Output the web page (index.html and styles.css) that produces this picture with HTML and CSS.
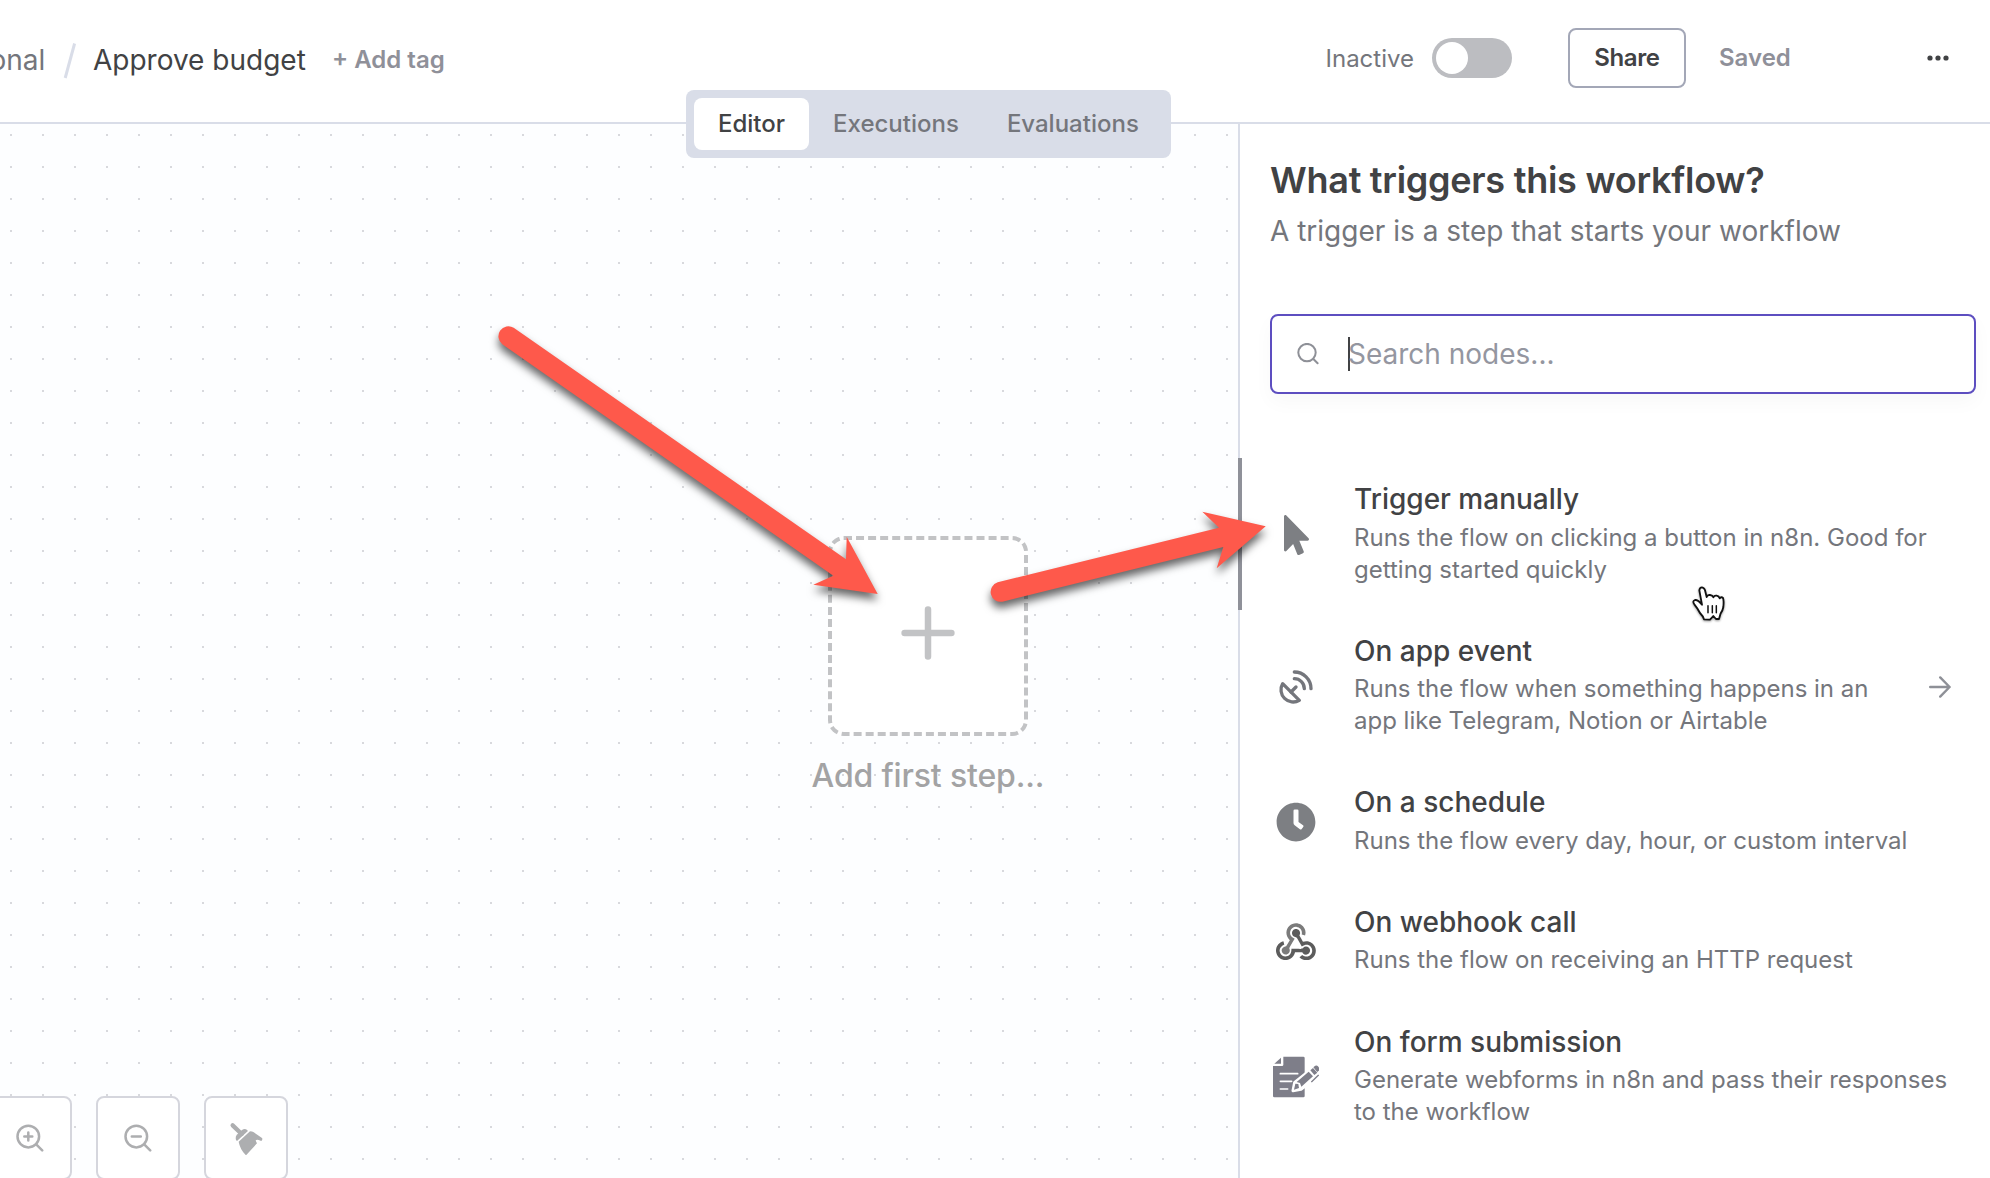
FILE: index.html
```html
<!DOCTYPE html>
<html lang="en">
<head>
<meta charset="utf-8">
<title>Approve budget</title>
<link rel="stylesheet" href="styles.css">
</head>
<body>
<div class="app">
  <header class="topbar">
    <div class="crumbs">
      <span class="crumb-project">Personal</span>
      <svg class="crumb-slash" width="14" height="38" viewBox="0 0 14 38"><path d="M11.6 1.5 2.2 36" stroke="#d9dde8" stroke-width="3"/></svg>
      <span class="crumb-name">Approve budget</span>
      <span class="add-tag">+ Add tag</span>
    </div>
    <div class="actions">
      <span class="status">Inactive</span>
      <span class="switch"><span class="knob"></span></span>
      <button class="share">Share</button>
      <span class="saved">Saved</span>
      <svg class="more" width="24" height="8" viewBox="0 0 24 8" fill="#414244"><circle cx="4" cy="4" r="2.6"/><circle cx="12" cy="4" r="2.6"/><circle cx="20" cy="4" r="2.6"/></svg>
    </div>
    <nav class="tabs">
      <span class="tab active">Editor</span>
      <span class="tab">Executions</span>
      <span class="tab">Evaluations</span>
    </nav>
  </header>

  <main class="main">
    <section class="canvas">
      <div class="first-step">
        <div class="first-step-box">
          <svg width="54" height="54" viewBox="0 0 54 54" stroke="#c2c3c5" stroke-width="6.5" stroke-linecap="round"><path d="M27 3.6v46.8M3.6 27h46.8"/></svg>
        </div>
        <span class="first-step-label">Add first step...</span>
      </div>
      <div class="controls">
        <button class="control"><svg width="28" height="28" viewBox="0 0 28 28" fill="none" stroke="#adaeb0" stroke-width="2.5" stroke-linecap="round"><circle cx="12.3" cy="12.6" r="10.8"/><path d="m20.2 20.4 6 6M12.3 8.6v8M8.3 12.6h8"/></svg></button>
        <button class="control"><svg width="28" height="28" viewBox="0 0 28 28" fill="none" stroke="#adaeb0" stroke-width="2.5" stroke-linecap="round"><circle cx="12.3" cy="12.6" r="10.8"/><path d="m20.2 20.4 6 6M7.8 12.6h9"/></svg></button>
        <button class="control"><svg width="34" height="34" viewBox="0 0 102 102" fill="#adaeb0"><path d="m11 13 27 26" stroke="#adaeb0" stroke-width="13" stroke-linecap="round"/><path d="M21 57q-3-10 4-17l14-13q9-7 16 1l1 3-32 29z"/><path d="m29 62 34-31q7 0 10 2l26 18q3 4-2 9-4-1-8-3-6-2-9 1 1 5 4 9l-33 36q-18-18-22-41z"/></svg></button>
      </div>
    </section>

    <aside class="panel">
      <div class="resizer"></div>
      <h1 class="panel-title">What triggers this workflow?</h1>
      <p class="panel-subtitle">A trigger is a step that starts your workflow</p>
      <div class="search">
        <svg class="search-icon" width="22" height="22" viewBox="0 0 22 22" fill="none" stroke="#8e9097" stroke-width="2" stroke-linecap="round"><circle cx="10" cy="9.6" r="8.7"/><path d="m16.6 16.2 4 4"/></svg>
        <span class="caret"></span>
        <span class="placeholder">Search nodes...</span>
      </div>
      <ul class="triggers">
        <li class="trigger">
          <span class="trigger-icon"><svg width="25" height="40" viewBox="0 0 320 512" fill="#7d7f83"><path d="M302.189 329.126H196.105l55.831 135.993c3.889 9.428-.555 19.999-9.444 23.999l-49.165 21.427c-9.165 4-19.443-.571-23.332-9.714l-53.053-129.136-86.664 89.138C18.729 472.71 0 463.554 0 447.977V18.299C0 1.899 19.921-6.096 30.277 5.443l284.412 292.542c11.472 11.179 3.007 31.141-12.5 31.141z"/></svg></span>
          <div class="trigger-text"><h2>Trigger manually</h2><p>Runs the flow on clicking a button in n8n. Good for<br>getting started quickly</p></div>
        </li>
        <li class="trigger">
          <span class="trigger-icon"><svg width="40" height="40" viewBox="0 0 24 24" fill="none" stroke="#74767c" stroke-width="2" stroke-linecap="round" stroke-linejoin="round"><path d="M4 10a7.31 7.31 0 0 0 10 10Z"/><path d="m9 15 3-3"/><path d="M17 13a6 6 0 0 0-6-6"/><path d="M21 13A10 10 0 0 0 11 3"/></svg></span>
          <div class="trigger-text"><h2>On app event</h2><p>Runs the flow when something happens in an<br>app like Telegram, Notion or Airtable</p></div>
          <svg class="chevron" width="22" height="22" viewBox="0 0 22 22" fill="none" stroke="#8e9097" stroke-width="2.4" stroke-linecap="round" stroke-linejoin="round"><path d="M1.2 11h19.4M11.2 1.4l9.4 9.6-9.4 9.6"/></svg>
        </li>
        <li class="trigger">
          <span class="trigger-icon"><svg width="40" height="40" viewBox="0 0 512 512" fill="#7d7f83"><path d="M256,8C119,8,8,119,8,256S119,504,256,504,504,393,504,256,393,8,256,8Zm92.49,313h0l-20,25a16,16,0,0,1-22.49,2.5h0l-67-49.72a40,40,0,0,1-15-31.23V112a16,16,0,0,1,16-16h32a16,16,0,0,1,16,16V256l58,42.5A16,16,0,0,1,348.49,321Z"/></svg></span>
          <div class="trigger-text"><h2>On a schedule</h2><p>Runs the flow every day, hour, or custom interval</p></div>
        </li>
        <li class="trigger">
          <span class="trigger-icon"><svg width="40" height="37.4" viewBox="0 0 256 239" fill="#5c5c5c"><path fill="#7b7b7b" d="M119.54 100.503c-10.61 17.836-20.775 35.108-31.152 52.25-2.665 4.401-3.984 7.986-1.855 13.58 5.878 15.454-2.414 30.493-17.998 34.575-14.697 3.851-29.016-5.808-31.932-21.543-2.584-13.927 8.224-27.58 23.58-29.757 1.286-.184 2.6-.205 4.762-.367l23.358-39.168C73.612 95.465 64.868 78.39 66.803 57.23c1.368-14.957 7.25-27.883 18-38.477 20.59-20.288 52.002-23.573 76.246-8.001 23.284 14.958 33.948 44.094 24.858 69.031-6.854-1.858-13.756-3.732-21.343-5.79 2.854-13.865.743-26.315-8.608-36.981-6.178-7.042-14.106-10.733-23.12-12.093-18.072-2.73-35.815 8.88-41.08 26.618-5.976 20.13 3.069 36.575 27.784 48.967z"/><path d="M149.841 79.41c7.475 13.187 15.065 26.573 22.587 39.836 38.02-11.763 66.686 9.284 76.97 31.817 12.422 27.219 3.93 59.457-20.465 76.25-25.04 17.238-56.707 14.293-78.892-7.851 5.654-4.733 11.336-9.487 17.407-14.566 21.912 14.192 41.077 13.524 55.305-3.282 12.133-14.337 11.87-35.714-.615-49.75-14.408-16.197-33.707-16.691-57.035-1.143-9.677-17.168-19.522-34.199-28.893-51.491-3.16-5.828-6.648-9.21-13.77-10.443-11.893-2.062-19.571-12.275-20.032-23.717-.453-11.316 6.214-21.545 16.634-25.53 10.322-3.949 22.435-.762 29.378 8.014 5.674 7.17 7.477 15.24 4.491 24.083-.83 2.466-1.905 4.852-3.07 7.774z"/><path d="M167.707 187.21h-45.77c-4.387 18.044-13.863 32.612-30.19 41.876-12.693 7.2-26.373 9.641-40.933 7.29-26.808-4.323-48.728-28.456-50.658-55.63-2.184-30.784 18.975-58.147 47.178-64.293 1.947 7.071 3.915 14.21 5.862 21.264-25.876 13.202-34.832 29.836-27.59 50.636 6.375 18.304 24.484 28.337 44.147 24.457 20.08-3.962 30.204-20.65 28.968-47.432 19.036 0 38.088-.197 57.126.097 7.434.117 13.173-.654 18.773-7.208 9.22-10.784 26.191-9.811 36.121.374 10.148 10.409 9.662 27.157-1.077 37.127-10.361 9.62-26.73 9.106-36.424-1.26-1.992-2.136-3.562-4.673-5.533-7.298z"/></svg></span>
          <div class="trigger-text"><h2>On webhook call</h2><p>Runs the flow on receiving an HTTP request</p></div>
        </li>
        <li class="trigger">
          <span class="trigger-icon"><svg width="46" height="42" viewBox="0 0 138 126" fill="#7e7e89"><path d="M31 2h60q4 0 4 4v114q0 4-4 4H4q-4 0-4-4V30h27q4 0 4-4z"/><path d="M24 5v18H4z"/><path d="M22 53h52M22 76h34M22 99h22" stroke="#fff" stroke-width="5" stroke-linecap="round"/><path d="m60 104 5-25 48-38 19 22-48 37z" fill="#fff" stroke="#fff" stroke-width="9" stroke-linejoin="round"/><path d="m63 101 4-18 9 1 2 12zM71 78l36-31 13 14-35 31-4-11zM112 43l8-7 13 14-9 7z"/><path d="m124 34 4-3q3-2 6 2l3 4q2 3-1 6l-3 2zM116 77l20-19" stroke="#7e7e89" stroke-width="4" stroke-linecap="round"/></svg></span>
          <div class="trigger-text"><h2>On form submission</h2><p>Generate webforms in n8n and pass their responses<br>to the workflow</p></div>
        </li>
      </ul>
    </aside>
  </main>

  <svg class="overlay" width="1990" height="1178" viewBox="0 0 1990 1178">
    <g class="callouts" fill="#fe594b">
      <path d="M513.7 327.8 846 559.3l.7-22.6 31 57.3-64.4-9.3 20-9L502.3 344.2a10 10 0 0 1 11.4-16.4z"/>
      <path d="M997.7 582.3 1219 527.7l-16.7-16 63.4 14.6-49 42 6.6-21.3-220.9 54.7a10 10 0 0 1-4.7-19.4z"/>
    </g>
    <g class="pointer" transform="translate(1660 560) scale(.3333)" stroke="#111" stroke-width="5.5" stroke-linejoin="round" stroke-linecap="round">
      <path fill="#fff" d="M118 91q1-9 8-9 7 1 9 9l5 20q2-7 10-6 8 1 10 7 3-6 10-5 7 1 9 8 5-6 10-1 3 9 1 27-2 11-8 19l-5 17h-9l-8-9-10 11-18-1q-3-10-12-19-8-15-17-26-7-10 2-13 9-1 21 14z"/>
      <path d="M144 137v21M157 137v21M169 137v21" stroke-width="4.5"/>
    </g>
  </svg>
</div>
</body>
</html>
```
FILE: styles.css
```css
* {
  box-sizing: border-box;
}

body {
  margin: 0;
  font-family: Inter, "Liberation Sans", sans-serif;
  color: #414244;
  background: #fff;
}

h1, h2, p, ul {
  margin: 0;
  padding: 0;
}

button {
  font: inherit;
  background: #fff;
  padding: 0;
}

.app {
  position: relative;
  display: flex;
  flex-direction: column;
  width: 1990px;
  height: 1178px;
  overflow: hidden;
}

/* Top bar */
.topbar {
  position: relative;
  display: flex;
  justify-content: space-between;
  flex: none;
  height: 124px;
  border-bottom: 2px solid #d9dde8;
  white-space: nowrap;
}

.crumbs {
  display: flex;
  align-items: center;
  height: 120px;
  margin-left: -70px;
  font-size: 28px;
}

.crumb-project {
  width: 115px;
  text-align: right;
  color: #74767c;
}

.crumb-slash {
  margin: 2px 16px 0 18px;
}

.crumb-name {
  width: 212px;
}

.add-tag {
  margin: 0 0 2px 27px;
  font-size: 24px;
  font-weight: 600;
  color: #8f9099;
}

.actions {
  display: flex;
  align-items: center;
  height: 116px;
  font-size: 24px;
}

.status {
  width: 90.5px;
  color: #74767c;
}

.switch {
  width: 80px;
  height: 40px;
  margin-left: 16px;
  padding: 4px;
  border-radius: 20px;
  background: #bcbdc1;
}

.knob {
  display: block;
  width: 32px;
  height: 32px;
  border-radius: 50%;
  background: #fff;
}

.share {
  width: 118px;
  height: 60px;
  margin-left: 56px;
  padding-bottom: 2px;
  border: 2px solid #a3a7b7;
  border-radius: 8px;
  font-weight: 600;
  letter-spacing: -0.4px;
  color: #414244;
}

.saved {
  width: 73px;
  margin: 0 0 2px 33px;
  font-weight: 600;
  color: #8f9099;
}

.more {
  margin: 0 40px 0 134px;
}

.tabs {
  position: absolute;
  left: 686px;
  top: 90px;
  z-index: 2;
  display: flex;
  height: 68px;
  padding: 8px;
  border-radius: 8px;
  background: #d9dde8;
  font-size: 24px;
  font-weight: 500;
  line-height: 51px;
}

.tab {
  padding: 0 24px;
  border-radius: 8px;
  color: #74767c;
}

.tab.active {
  background: #fff;
  color: #414244;
}

/* Canvas */
.main {
  display: flex;
  flex: 1;
}

.canvas {
  position: relative;
  flex: 1;
  background-color: #fdfeff;
  background-image: conic-gradient(from 270deg at 2px 2px, #d8d9dd 90deg, transparent 0);
  background-size: 32px 32px;
  background-position: 10px 10px;
}

.first-step {
  position: absolute;
  left: 778px;
  top: 412px;
  display: flex;
  flex-direction: column;
  align-items: center;
  width: 300px;
}

.first-step-box {
  display: flex;
  align-items: center;
  justify-content: center;
  width: 200px;
  height: 200px;
  padding-bottom: 6px;
  border: 4px dashed #c2c3c5;
  border-radius: 16px;
  background: #fff;
}

.first-step-label {
  margin-top: 20px;
  font-size: 32px;
  font-weight: 500;
  letter-spacing: -0.15px;
  line-height: 40px;
  color: #a3a3a4;
}

.controls {
  position: absolute;
  left: -12px;
  top: 972px;
  display: flex;
  gap: 24px;
}

.control {
  display: flex;
  align-items: center;
  justify-content: center;
  width: 84px;
  height: 84px;
  border: 2px solid #d5d6dd;
  border-radius: 8px;
}

/* Trigger panel */
.panel {
  position: relative;
  flex: none;
  width: 752px;
  padding: 33px 14px 0 30px;
  border-left: 2px solid #d9dde8;
  background: #fff;
  white-space: nowrap;
}

.resizer {
  position: absolute;
  left: -2px;
  top: 334px;
  width: 4px;
  height: 152px;
  background: #8f9199;
}

.panel-title {
  font-size: 36px;
  font-weight: 600;
  letter-spacing: -0.27px;
  line-height: 46px;
}

.panel-subtitle {
  margin-top: 8px;
  font-size: 28px;
  line-height: 40px;
  color: #74767c;
}

.search {
  display: flex;
  align-items: center;
  height: 80px;
  margin-top: 63px;
  padding-left: 25px;
  border: 2px solid #5d4ec0;
  border-radius: 8px;
  background: #fff;
  box-shadow: 0 8px 20px rgba(0, 0, 0, 0.03);
  font-size: 28px;
  color: #9496a0;
}

.caret {
  width: 2px;
  height: 34px;
  margin-left: 29px;
  background: #414244;
}

.placeholder {
  margin-left: -2px;
}

.triggers {
  margin-top: 63.7px;
  list-style: none;
}

.trigger {
  display: flex;
  align-items: center;
  padding: 23.6px 10px 23.6px 0;
}

.trigger-icon {
  display: flex;
  justify-content: center;
  width: 52px;
  margin: 3px 32px 0 0;
}

.trigger-text h2 {
  font-size: 28px;
  font-weight: 500;
  line-height: 36.4px;
}

.trigger-text p {
  margin-top: 4px;
  font-size: 24px;
  line-height: 32px;
  color: #74767c;
}

.chevron {
  margin: 4px 15px 0 auto;
}

/* Annotation layer */
.overlay {
  position: absolute;
  left: 0;
  top: 0;
  z-index: 3;
}

.callouts path {
  filter: drop-shadow(0 6px 4px rgba(0, 0, 0, 0.6));
}

.pointer {
  filter: drop-shadow(0 3px 3px rgba(0, 0, 0, 0.4));
}
```
